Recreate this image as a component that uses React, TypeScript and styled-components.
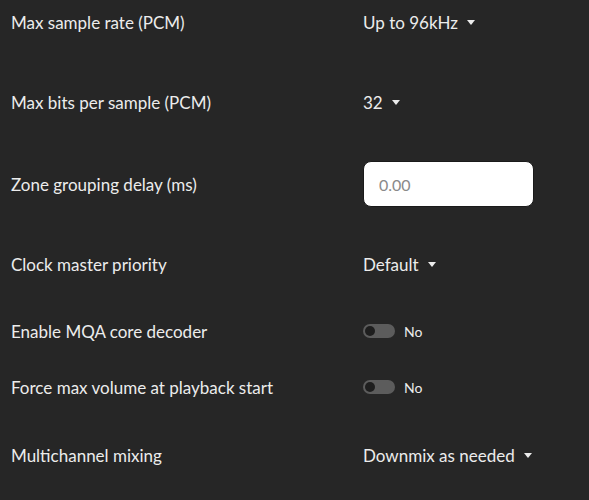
import styled, { createGlobalStyle } from 'styled-components';

const GlobalStyle = createGlobalStyle`
    html, body {
        margin: 0;
        padding: 0;
        background: #262626;
    }
    body {
        font-family: Lato, 'Noto Sans', sans-serif;
        color: #ececec;
    }
`;

type Setting =
    | { label: string; kind: 'select'; value: string; space: number }
    | { label: string; kind: 'input'; placeholder: string; space: number }
    | { label: string; kind: 'toggle'; on: boolean; space: number };

const settings: Setting[] = [
    { label: 'Max sample rate (PCM)', kind: 'select', value: 'Up to 96kHz', space: 0 },
    { label: 'Max bits per sample (PCM)', kind: 'select', value: '32', space: 36 },
    { label: 'Zone grouping delay (ms)', kind: 'input', placeholder: '0.00', space: 37 },
    { label: 'Clock master priority', kind: 'select', value: 'Default', space: 37 },
    { label: 'Enable MQA core decoder', kind: 'toggle', on: false, space: 23 },
    { label: 'Force max volume at playback start', kind: 'toggle', on: false, space: 12 },
    { label: 'Multichannel mixing', kind: 'select', value: 'Downmix as needed', space: 24 },
];

const App = () => {
    return (
        <Page>
            <GlobalStyle />
            {settings.map(s => (
                <Row key={s.label} $space={s.space}>
                    <Label>{s.label}</Label>
                    {s.kind === 'select' && (
                        <Select>
                            {s.value}
                            <Caret />
                        </Select>
                    )}
                    {s.kind === 'input' && <TextBox placeholder={s.placeholder} />}
                    {s.kind === 'toggle' && (
                        <ToggleWrap>
                            <Track $on={s.on}>
                                <Knob $on={s.on} />
                            </Track>
                            <ToggleText>{s.on ? 'Yes' : 'No'}</ToggleText>
                        </ToggleWrap>
                    )}
                </Row>
            ))}
        </Page>
    );
};
export default App;

const Page = styled.div`
    display: flex;
    flex-direction: column;
    padding: 0 0 0 11px;
`;

const Row = styled.div<{ $space: number }>`
    display: grid;
    grid-template-columns: 352px 1fr;
    align-items: center;
    height: 44px;
    margin-top: ${props => props.$space}px;
`;

const Label = styled.div`
    font-size: 17px;
`;

const Select = styled.div`
    display: flex;
    align-items: center;
    gap: 9px;
    font-size: 17px;
    cursor: pointer;
`;

const Caret = styled.span`
    width: 0;
    height: 0;
    border-left: 4px solid transparent;
    border-right: 4px solid transparent;
    border-top: 5px solid #ececec;
    margin-top: 1px;
`;

const TextBox = styled.input`
    box-sizing: border-box;
    width: 171px;
    height: 46px;
    border: 1px solid #1a1a1a;
    border-radius: 8px;
    background: #ffffff;
    padding: 0 15px;
    font-family: Lato, 'Noto Sans', sans-serif;
    font-size: 16px;
    color: #333;
    outline: none;

    &::placeholder {
        color: #8a8a8a;
    }
`;

const ToggleWrap = styled.div`
    display: flex;
    align-items: center;
    gap: 9px;
`;

const Track = styled.div<{ $on: boolean }>`
    position: relative;
    width: 32px;
    height: 14px;
    border-radius: 7px;
    background: ${props => (props.$on ? '#7b6ff0' : '#5c5c5c')};
`;

const Knob = styled.div<{ $on: boolean }>`
    position: absolute;
    top: 2px;
    left: ${props => (props.$on ? '20px' : '2px')};
    width: 10px;
    height: 10px;
    border-radius: 50%;
    background: #1e1e1e;
`;

const ToggleText = styled.span`
    font-size: 14px;
`;
